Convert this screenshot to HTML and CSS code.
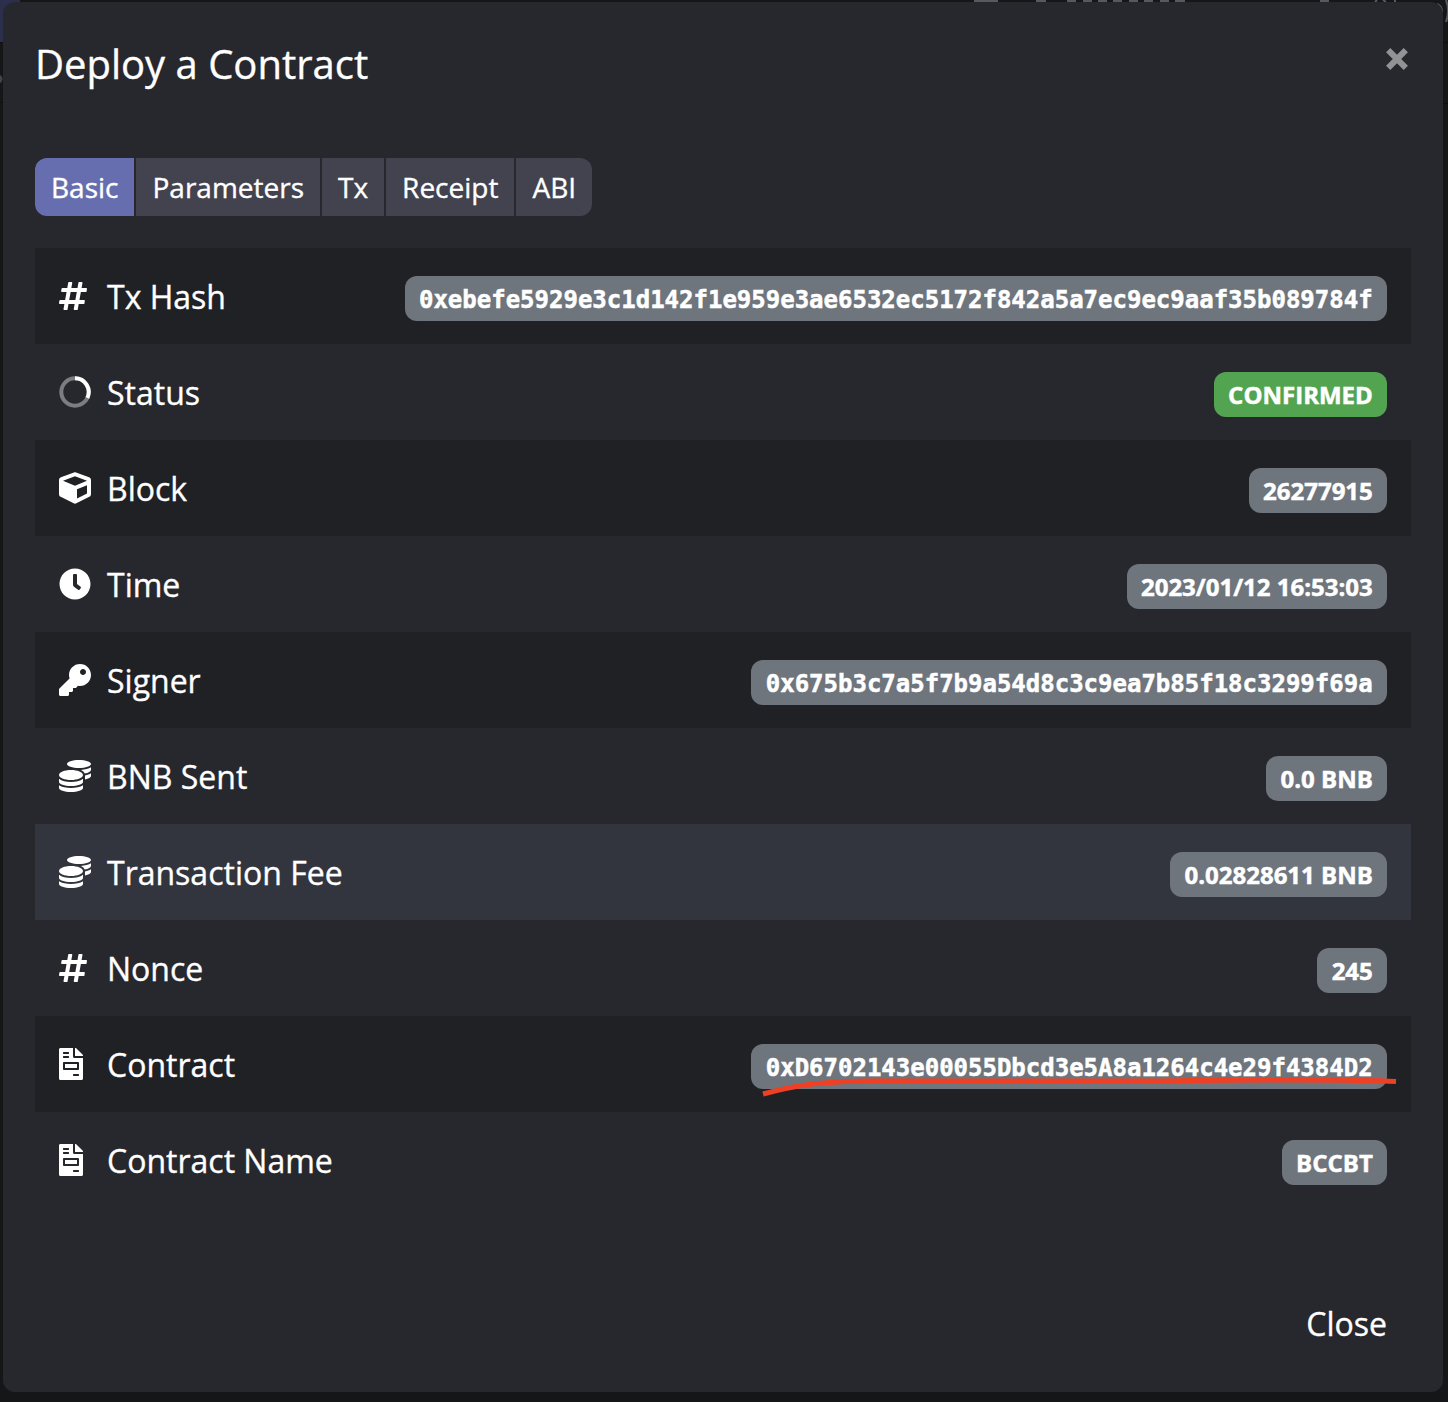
FILE: index.html
```html
<!DOCTYPE html>
<html lang="en">
<head>
<meta charset="utf-8">
<title>Deploy a Contract</title>
<link rel="stylesheet" href="styles.css">
</head>
<body>
<svg class="sprite" aria-hidden="true">
  <symbol id="hashtag" viewBox="0 0 448 512"><path d="M440.667 182.109l7.143-40c1.313-7.355-4.342-14.109-11.813-14.109h-74.81l14.623-81.891C377.123 38.754 371.468 32 363.997 32h-40.632a12 12 0 0 0-11.813 9.891L296.175 128H197.54l14.623-81.891C213.477 38.754 207.822 32 200.35 32h-40.632a12 12 0 0 0-11.813 9.891L132.528 128H53.432a12 12 0 0 0-11.813 9.891l-7.143 40C33.163 185.246 38.818 192 46.289 192h74.81L98.242 320H19.146a12 12 0 0 0-11.813 9.891l-7.143 40C-1.123 377.246 4.532 384 12.003 384h74.81L72.19 465.891C70.877 473.246 76.532 480 84.003 480h40.632a12 12 0 0 0 11.813-9.891L151.826 384h98.634l-14.623 81.891C234.523 473.246 240.178 480 247.65 480h40.632a12 12 0 0 0 11.813-9.891L315.472 384h79.096a12 12 0 0 0 11.813-9.891l7.143-40c1.313-7.355-4.342-14.109-11.813-14.109h-74.81l22.857-128h79.096a12 12 0 0 0 11.813-9.891zM261.889 320h-98.634l22.857-128h98.634l-22.857 128z"/></symbol>
  <symbol id="cube" viewBox="0 0 512 512"><path d="M239.1 6.3l-208 78c-18.7 7-31.1 25-31.1 45v225.1c0 18.2 10.3 34.8 26.5 42.9l208 104c13.5 6.8 29.4 6.8 42.9 0l208-104c16.3-8.1 26.5-24.8 26.5-42.9V129.3c0-20-12.4-37.9-31.1-44.9l-208-78C262 2.2 250 2.2 239.1 6.3zM256 68.4l192 72v1.1l-192 78-192-78v-1.1l192-72zm32 356V275.5l160-65v133.9l-160 80z"/></symbol>
  <symbol id="clock" viewBox="0 0 512 512"><path d="M256,8C119,8,8,119,8,256S119,504,256,504,504,393,504,256,393,8,256,8Zm92.49,313h0l-20,25a16,16,0,0,1-22.49,2.5h0l-67-49.72a40,40,0,0,1-15-31.23V112a16,16,0,0,1,16-16h32a16,16,0,0,1,16,16V256l58,42.5A16,16,0,0,1,348.49,321Z"/></symbol>
  <symbol id="key" viewBox="0 0 512 512"><path d="M512 176.001C512 273.203 433.202 352 336 352c-11.22 0-22.19-1.062-32.827-3.069l-24.012 27.014A23.999 23.999 0 0 1 261.223 384H224v40c0 13.255-10.745 24-24 24h-40v40c0 13.255-10.745 24-24 24H24c-13.255 0-24-10.745-24-24v-78.059c0-6.365 2.529-12.47 7.029-16.971l161.802-161.802C163.108 213.814 160 195.271 160 176 160 78.798 238.797.001 335.999 0 433.488-.001 512 78.511 512 176.001zM336 128c0 26.51 21.49 48 48 48s48-21.49 48-48-21.49-48-48-48-48 21.49-48 48z"/></symbol>
  <symbol id="coins" viewBox="0 0 512 512"><path d="M0 405.3V448c0 35.3 86 64 192 64s192-28.7 192-64v-42.7C342.7 434.4 267.2 448 192 448S41.3 434.4 0 405.3zM320 128c106 0 192-28.7 192-64S426 0 320 0 128 28.7 128 64s86 64 192 64zM0 300.4V352c0 35.3 86 64 192 64s192-28.7 192-64v-51.6c-41.3 34-116.9 51.6-192 51.6S41.3 334.4 0 300.4zm416 11c57.3-11.1 96-31.7 96-55.4v-42.7c-23.2 16.4-57.3 27.6-96 34.5v63.6zM192 160C86 160 0 195.8 0 240s86 80 192 80 192-35.8 192-80-86-80-192-80zm219.3 56.3c60-10.8 100.7-32 100.7-56.3v-42.7c-35.5 25.1-96.5 38.6-160.7 41.8 29.5 14.3 51.2 33.5 60 57.2z"/></symbol>
  <symbol id="invoice" viewBox="0 0 384 512"><path d="M288 256H96v64h192v-64zm89-151L279.100 7c-4.500-4.500-10.600-7-17-7H256v128h128v-6.100c0-6.300-2.500-12.400-7-16.900zm-153 31V0H24C10.700 0 0 10.700 0 24v464c0 13.300 10.700 24 24 24h336c13.300 0 24-10.700 24-24V160H248c-13.200 0-24-10.800-24-24zM64 72c0-4.420 3.580-8 8-8h80c4.420 0 8 3.580 8 8v16c0 4.420-3.580 8-8 8H72c-4.420 0-8-3.580-8-8V72zm0 64c0-4.420 3.580-8 8-8h80c4.420 0 8 3.580 8 8v16c0 4.420-3.580 8-8 8H72c-4.420 0-8-3.580-8-8v-16zm256 304c0 4.420-3.580 8-8 8h-80c-4.420 0-8-3.580-8-8v-16c0-4.420 3.580-8 8-8h80c4.420 0 8 3.580 8 8v16zm0-200v96c0 8.840-7.160 16-16 16H80c-8.840 0-16-7.160-16-16v-96c0-8.840 7.160-16 16-16h224c8.840 0 16 7.160 16 16z"/></symbol>
</svg>

<!-- Dimmed slivers of the page behind the dialog -->
<svg class="backdrop" viewBox="0 0 1448 1402" aria-hidden="true">
  <rect width="20" height="42" fill="#2c2f4b"/>
  <path d="M0 42.500H3M0 102.500H3M1443 42.500h5M1443 103.500h5" stroke="#0d0e10"/>
  <circle cx="-2" cy="79" r="4.500" fill="#444549"/>
  <g fill="none" stroke="#58595d" stroke-width="2">
    <path d="M974 1h24M1036 1h10M1067 1h9M1083 1h9M1098 1h9M1113 1h9M1129 1h9M1144 1h9M1160 1h9M1175 1h10M1320 1h9M1377 0l-2 2M1383 0l3 2M1395 0v2"/>
    <path d="M1437 4Q1442 6 1442 12M1446 0Q1450 11 1446 22"/>
  </g>
</svg>

<main class="dialog">
  <header class="dialog-header">
    <h1>Deploy a Contract</h1>
    <button class="dismiss" aria-label="Dismiss"><svg viewBox="0 0 24 24"><path d="M3.200 3.200l17.600 17.600M20.800 3.200L3.200 20.800"/></svg></button>
  </header>

  <nav class="tabs">
    <button class="tab active">Basic</button>
    <button class="tab">Parameters</button>
    <button class="tab">Tx</button>
    <button class="tab">Receipt</button>
    <button class="tab">ABI</button>
  </nav>

  <ul class="details">
    <li class="row"><svg class="icon"><use href="#hashtag"/></svg><span class="label">Tx Hash</span><span class="badge mono">0xebefe5929e3c1d142f1e959e3ae6532ec5172f842a5a7ec9ec9aaf35b089784f</span></li>
    <li class="row"><svg class="icon spinner" viewBox="0 0 32 32"><circle cx="16" cy="16" r="13.700"/><path d="M16 2.300A13.700 13.700 0 0 1 28.400 21.800"/></svg><span class="label">Status</span><span class="badge success">CONFIRMED</span></li>
    <li class="row"><svg class="icon"><use href="#cube"/></svg><span class="label">Block</span><span class="badge">26277915</span></li>
    <li class="row"><svg class="icon"><use href="#clock"/></svg><span class="label">Time</span><span class="badge">2023/01/12 16:53:03</span></li>
    <li class="row"><svg class="icon"><use href="#key"/></svg><span class="label">Signer</span><span class="badge mono">0x675b3c7a5f7b9a54d8c3c9ea7b85f18c3299f69a</span></li>
    <li class="row"><svg class="icon"><use href="#coins"/></svg><span class="label">BNB Sent</span><span class="badge">0.0 BNB</span></li>
    <li class="row hovered"><svg class="icon"><use href="#coins"/></svg><span class="label">Transaction Fee</span><span class="badge">0.02828611 BNB</span></li>
    <li class="row"><svg class="icon"><use href="#hashtag"/></svg><span class="label">Nonce</span><span class="badge">245</span></li>
    <li class="row"><svg class="icon"><use href="#invoice"/></svg><span class="label">Contract</span><span class="badge mono">0xD6702143e00055Dbcd3e5A8a1264c4e29f4384D2<svg class="marker" viewBox="0 0 636 22" aria-hidden="true"><path d="M12 19C46 10 66 7 116 6H390C440 6 460 4.500 540 5C600 5 620 5 645 6.500"/></svg></span></li>
    <li class="row"><svg class="icon"><use href="#invoice"/></svg><span class="label">Contract Name</span><span class="badge">BCCBT</span></li>
  </ul>

  <footer class="dialog-footer"><button class="close">Close</button></footer>
</main>
</body>
</html>
```

FILE: styles.css
```css
* { box-sizing: border-box; }

body {
  margin: 0;
  height: 1402px;
  padding: 2px 5px 10px 3px;
  overflow: hidden;
  background: #151618;
  color: #fff;
  font-family: "Open Sans", "Noto Sans", sans-serif;
  -webkit-text-stroke: 0.35px currentColor;
}

button {
  border: 0;
  padding: 0;
  background: none;
  color: inherit;
  font: inherit;
}

.sprite { position: absolute; width: 0; height: 0; }

.backdrop {
  position: absolute;
  top: 0;
  left: 0;
  width: 1448px;
  height: 1402px;
}

.dialog {
  position: relative;
  display: flex;
  flex-direction: column;
  height: 1390px;
  padding: 32px;
  border-radius: 12px;
  background: #27282d;
}

.dialog-header {
  display: flex;
  justify-content: space-between;
  height: 124px;
}

h1 {
  margin: 0;
  font-size: 40px;
  font-weight: 400;
  line-height: 60px;
}

.dismiss { width: 24px; height: 24px; margin: 13px 2px 0 0; }
.dismiss svg { display: block; width: 24px; height: 24px; }
.dismiss path { fill: none; stroke: #939396; stroke-width: 6; }

.tabs { display: flex; gap: 2px; }

.tab {
  height: 58px;
  padding: 0 16px;
  background: #42434e;
  font-size: 28px;
  line-height: 58px;
}
.tab.active { background: #676eaf; }
.tab:first-child { border-radius: 12px 0 0 12px; }
.tab:last-child { border-radius: 0 12px 12px 0; }

.details { margin: 32px 0 0; padding: 0; list-style: none; }

.row {
  display: flex;
  align-items: center;
  gap: 16px;
  height: 96px;
  padding: 0 24px;
}
.row:nth-child(odd) { background: #202125; }
.row.hovered { background: #32353e; }

.icon { flex: none; width: 32px; height: 32px; fill: #fff; }
.icon:has([href="#hashtag"]) { width: 28px; margin-right: 4px; }
.icon:has([href="#invoice"]) { width: 24px; margin-right: 8px; }

.spinner { fill: none; stroke: #fff; stroke-width: 4; }
.spinner circle { stroke: #7c7d80; }

.label { flex: 1; padding-top: 2px; font-size: 32px; line-height: 48px; }

.badge {
  position: relative;
  height: 45px;
  margin-top: 5px;
  padding: 0 14.2px;
  border-radius: 12px;
  background: #6e757d;
  font-size: 24px;
  font-weight: 700;
  line-height: 46px;
  white-space: nowrap;
  -webkit-text-stroke-width: 0.5px;
}
.badge.success { background: #52a450; }
.badge.mono {
  padding: 0 14.4px;
  font-family: "DejaVu Sans Mono", monospace;
  line-height: 48px;
}

.marker {
  position: absolute;
  top: 31px;
  left: 0;
  width: 636px;
  height: 22px;
  overflow: visible;
}
.marker path { fill: none; stroke: #ee4025; stroke-width: 5; }

.dialog-footer {
  display: flex;
  justify-content: flex-end;
  margin-top: auto;
  padding: 0 24px 12px 0;
}
.close { font-size: 32px; line-height: 48px; }
```
